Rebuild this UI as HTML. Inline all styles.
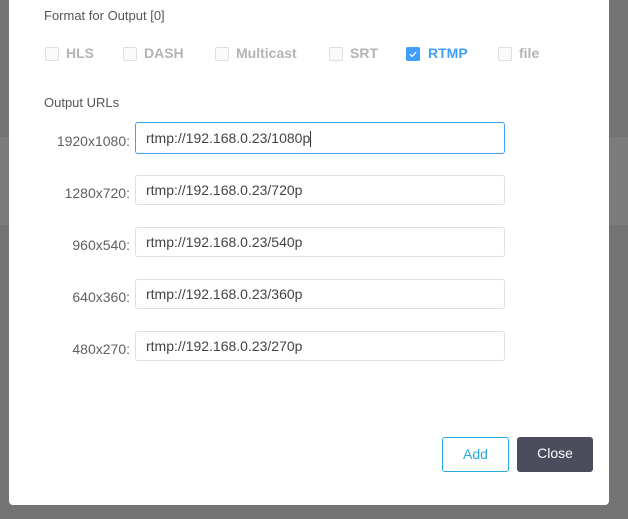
<!DOCTYPE html>
<html><head><style>
html,body{margin:0;padding:0;width:628px;height:519px;overflow:hidden;background:#737373;font-family:"Liberation Sans",sans-serif;}
.bandl{position:absolute;left:0;top:137px;width:9px;height:88px;background:#7b7b7b}
.bandr{position:absolute;left:609px;top:137px;width:19px;height:88px;background:#7b7b7b}
.modal{position:absolute;left:9px;top:-5px;width:600px;height:510px;background:#fff;border-radius:4px;}
.t{position:absolute;font-size:13px;color:#555;}
.cb{position:absolute;top:47px;width:12px;height:12px;border:1px solid #dcdfe6;border-radius:2px;background:#fafafa}
.cbl{position:absolute;top:45px;font-size:14px;font-weight:bold;color:#b4b4b4}
.lab{position:absolute;right:498px;font-size:14px;color:#606060;text-align:right}
.in{position:absolute;left:135px;border:1px solid #dcdfe6;border-radius:3px;box-sizing:border-box;width:370px;height:30px;font-size:14px;color:#444;padding-left:10px;line-height:28px}
.btn{position:absolute;top:437px;height:35px;border-radius:3px;box-sizing:border-box;font-size:14px;text-align:center;line-height:33px}
</style></head><body>
<div class="bandl"></div><div class="bandr"></div>
<div class="modal"></div>
<div class="t" style="left:44px;top:8px;font-size:13px">Format for Output [0]</div>
<div class="cb" style="left:45px"></div><div class="cbl" style="left:66px">HLS</div>
<div class="cb" style="left:123px"></div><div class="cbl" style="left:144px">DASH</div>
<div class="cb" style="left:215px"></div><div class="cbl" style="left:236px">Multicast</div>
<div class="cb" style="left:329px"></div><div class="cbl" style="left:350px">SRT</div>
<div class="cb" style="left:406px;background:#409eff;border-color:#409eff"><svg width="12" height="12" style="position:absolute;left:0;top:0"><path d="M3 6.2l2.2 2.2L9.2 4" stroke="#fff" stroke-width="1.3" fill="none"/></svg></div><div class="cbl" style="left:428px;color:#409eff">RTMP</div>
<div class="cb" style="left:498px"></div><div class="cbl" style="left:519px">file</div>
<div class="t" style="left:44px;top:95px">Output URLs</div>
<div class="lab" style="top:133px">1920x1080:</div>
<div class="in" style="top:122px;height:32px;line-height:30px;border-color:#409eff">rtmp://192.168.0.23/1080p<span style="display:inline-block;width:1px;height:16px;background:#333;vertical-align:middle"></span></div>
<div class="lab" style="top:185px">1280x720:</div>
<div class="in" style="top:175px">rtmp://192.168.0.23/720p</div>
<div class="lab" style="top:237px">960x540:</div>
<div class="in" style="top:227px">rtmp://192.168.0.23/540p</div>
<div class="lab" style="top:289px">640x360:</div>
<div class="in" style="top:279px">rtmp://192.168.0.23/360p</div>
<div class="lab" style="top:341px">480x270:</div>
<div class="in" style="top:331px">rtmp://192.168.0.23/270p</div>
<div class="btn" style="left:442px;width:67px;border:1px solid #29a9e0;color:#29a9e0;background:#fff">Add</div>
<div class="btn" style="left:517px;width:76px;background:#4b4c5c;color:#fff">Close</div>
</body></html>
